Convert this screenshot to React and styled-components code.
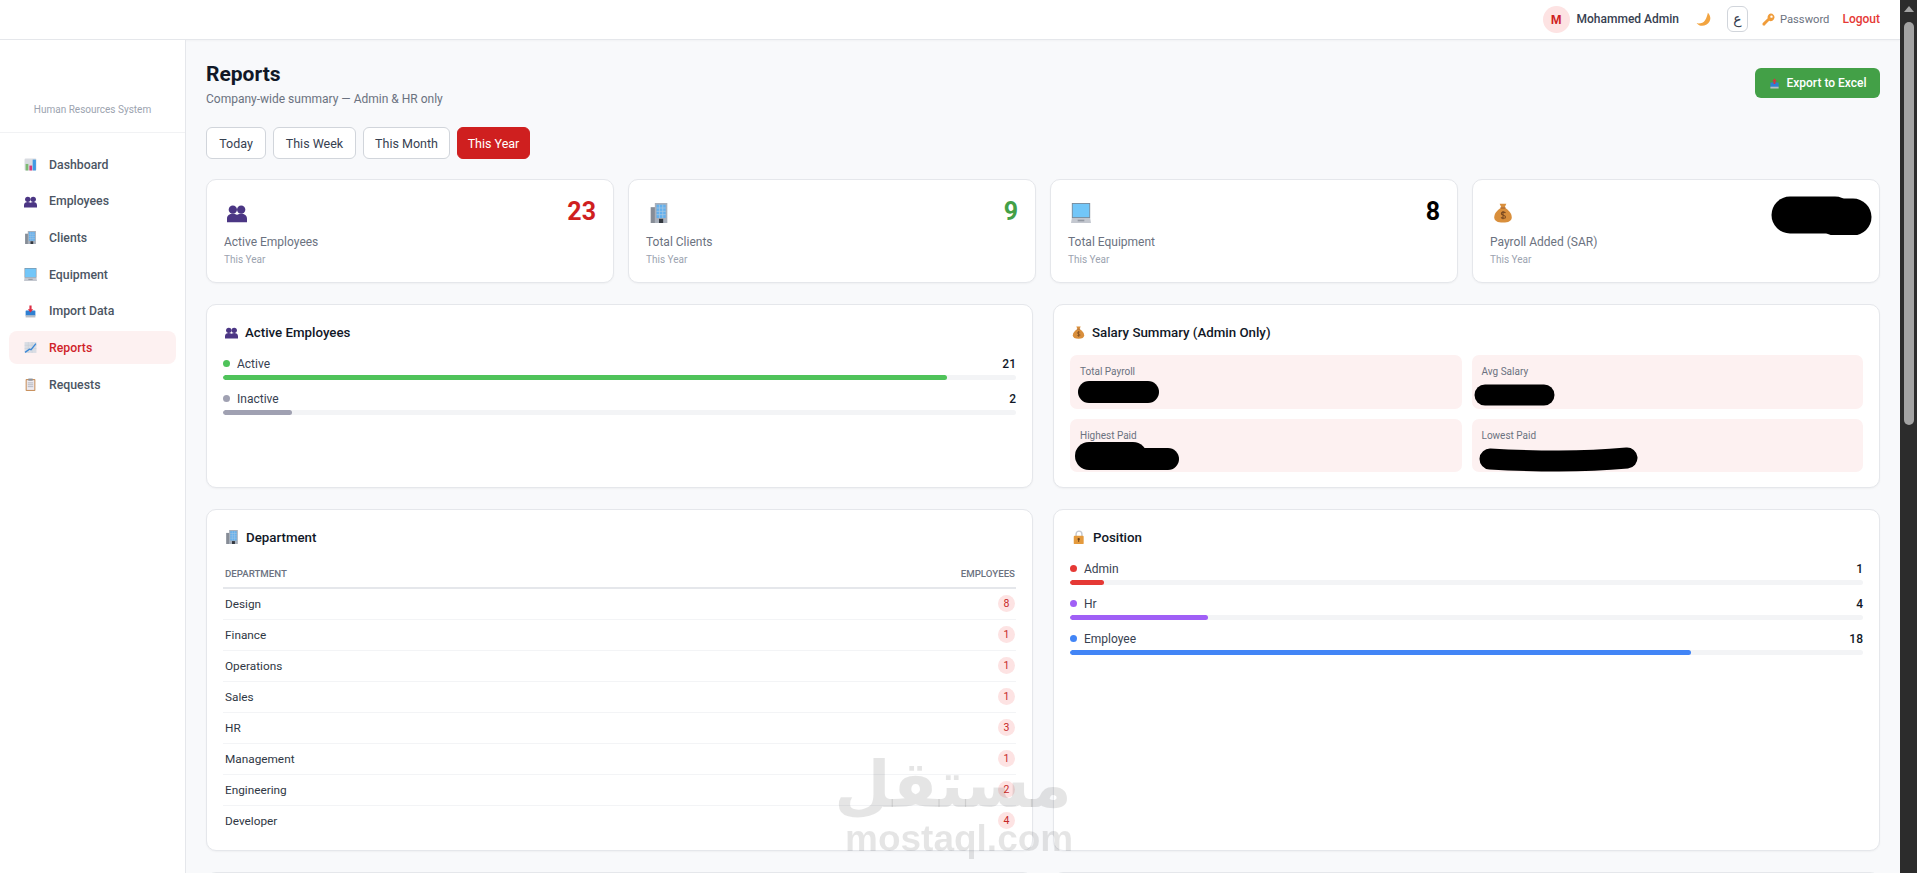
import React from 'react'
import styled, { createGlobalStyle } from 'styled-components'

const GlobalStyle = createGlobalStyle`
    html, body {
        margin: 0;
        height: 100%;
        overflow: hidden;
    }
    body {
        font-family: Roboto, "DejaVu Sans", sans-serif;
        color: #111827;
        background: #f8f9fb;
    }
    * {
        box-sizing: border-box;
    }
`

// small colour icons, the screenshot has emoji here
const Svg = styled.svg`
    display: block;
    flex-shrink: 0;
`

const ChartIcon = ({ size }) => (
    <Svg width={size} height={size} viewBox="0 0 24 24">
        <rect x="1" y="1" width="22" height="22" rx="2" fill="#d9dce1" />
        <rect x="3" y="11" width="5" height="12" fill="#7dba72" />
        <rect x="10" y="14" width="5" height="9" fill="#d8387a" />
        <rect x="16" y="3" width="6" height="20" fill="#3f9be4" />
    </Svg>
)

const BustsIcon = ({ size }) => (
    <Svg width={size} height={size} viewBox="0 0 24 24">
        <circle cx="7" cy="8" r="5" fill="#4b3684" />
        <circle cx="17" cy="8" r="5" fill="#4b3684" />
        <path d="M0 23v-4c0-4 3-6 7-6s5 1.500 5 1.500S13 13 17 13s7 2 7 6v4z" fill="#4b3684" />
    </Svg>
)

const OfficeIcon = ({ size }) => (
    <Svg width={size} height={size} viewBox="0 0 24 24">
        <rect x="2" y="5" width="9" height="19" fill="#868c96" />
        <rect x="7" y="0" width="15" height="24" fill="#a9b0bb" />
        <rect x="9" y="2" width="11" height="16" fill="#62b0ee" />
        <path d="M9 6h11M9 10h11M9 14h11M12.500 2v16M16.500 2v16" stroke="#a9c8e2" strokeWidth="0.9" />
        <rect x="12" y="19" width="5" height="5" fill="#33383f" />
    </Svg>
)

const ComputerIcon = ({ size }) => (
    <Svg width={size} height={size} viewBox="0 0 24 24">
        <rect x="1" y="0" width="22" height="18" fill="#7d8794" />
        <rect x="2" y="1" width="20" height="16" fill="#72c6f8" />
        <path d="M1 18h22l1 6H0z" fill="#c3c7cf" />
        <rect x="8" y="20" width="8" height="2" fill="#9298a2" />
    </Svg>
)

const TrayIcon = ({ size, up }) => (
    <Svg width={size} height={size} viewBox="0 0 24 24">
        <rect x="3" y="10" width="18" height="10" rx="1" fill="#2f80d2" />
        <rect x="3" y="19" width="18" height="4" fill="#b9bec6" />
        {up
            ? <path d="M12 1l5 6h-3v6h-4V7H7z" fill="#dd2e44" />
            : <path d="M10 1h4v7h3l-5 6-5-6h3z" fill="#dd2e44" />}
    </Svg>
)

const TrendIcon = ({ size }) => (
    <Svg width={size} height={size} viewBox="0 0 24 24">
        <rect x="1" y="2" width="22" height="20" fill="#d9dde4" />
        <path d="M1 8h22M1 14h22M8 2v20M15 2v20" stroke="#c4c9d2" strokeWidth="0.8" />
        <path d="M2 21l8-6 3 1 9-11" fill="none" stroke="#3a86d6" strokeWidth="2.400" />
    </Svg>
)

const ClipboardIcon = ({ size }) => (
    <Svg width={size} height={size} viewBox="0 0 24 24">
        <rect x="3" y="2" width="18" height="22" rx="1.500" fill="#c9925f" />
        <rect x="5" y="4" width="14" height="18" fill="#eceaf0" />
        <rect x="8" y="1" width="8" height="4" fill="#8d939d" />
        <path d="M7 9h10M7 12.500h10M7 16h10" stroke="#a2a6b0" strokeWidth="1.400" />
    </Svg>
)

const MoneyIcon = ({ size }) => (
    <Svg width={size} height={size} viewBox="0 0 24 24">
        <path d="M8 1h8l-2 4.500h-4z" fill="#d98f3c" />
        <path d="M9.500 6h5c4.500 2.500 8 7 8 11 0 4.500-4 6.500-10.500 6.500S1.500 21.500 1.500 17c0-4 3.500-8.500 8-11z" fill="#d98f3c" />
        <rect x="9" y="5" width="6" height="1.800" fill="#b2692a" />
        <path d="M15 12c-1-1.500-5-1.500-5 .8 0 2.500 5 1.400 5 3.900 0 2.300-4.200 2-5.300.5M12 9.500v10" fill="none" stroke="#7c4a20" strokeWidth="1.300" />
    </Svg>
)

const MoonIcon = ({ size }) => (
    <Svg width={size} height={size} viewBox="0 0 24 24">
        <path d="M19 1C25 7 24 16 17 20 11 23.500 5 22.500 1 18 7 19 12 17 14.500 13 17 9 18 5 19 1z" fill="#f2a440" />
    </Svg>
)

const KeyIcon = ({ size }) => (
    <Svg width={size} height={size} viewBox="0 0 24 24">
        <path d="M16 1a7 7 0 1 1-2.800 13.400L6 21.500 5.500 23H2l-1-1v-3l9.500-9.500A7 7 0 0 1 16 1zm1.500 3.500a2.200 2.200 0 1 0 0 4.400 2.200 2.200 0 0 0 0-4.400z" fill="#f09c3a" fillRule="evenodd" />
    </Svg>
)

const LockIcon = ({ size }) => (
    <Svg width={size} height={size} viewBox="0 0 24 24">
        <path d="M7 11V7a5 5 0 0 1 10 0v4" fill="none" stroke="#c3c7cf" strokeWidth="2.400" />
        <rect x="3" y="10" width="17" height="14" rx="1.500" fill="#e49a3d" />
        <circle cx="11.500" cy="15.500" r="2" fill="#6b4218" />
        <rect x="10.700" y="15.500" width="1.600" height="5" fill="#6b4218" />
    </Svg>
)

const Shell = styled.div`
    display: flex;
    width: 100vw;
    height: 100vh;
    overflow: hidden;
`

const Page = styled.div`
    flex: 1;
    min-width: 0;
    display: flex;
    flex-direction: column;
`

const TopBar = styled.header`
    height: 40px;
    flex-shrink: 0;
    display: flex;
    align-items: center;
    justify-content: flex-end;
    padding: 0 20px 1px 0;
    background: #fff;
    border-bottom: 1px solid #e5e7eb;
    box-shadow: 0 1px 2px rgba(0, 0, 0, 0.03);
`

const Avatar = styled.div`
    width: 27px;
    height: 27px;
    border-radius: 50%;
    background: #fde3e3;
    color: #cf1f1f;
    font-family: "Liberation Sans", sans-serif;
    font-size: 13px;
    font-weight: 700;
    display: flex;
    align-items: center;
    justify-content: center;
    margin-right: 7px;
`

const UserName = styled.span`
    font-size: 12px;
    font-weight: 500;
    color: #374151;
    margin-right: 17px;
`

const LangButton = styled.div`
    width: 21px;
    height: 26px;
    margin: 0 14px 0 16px;
    border: 1px solid #d1d5db;
    border-radius: 6px;
    font-family: "DejaVu Sans", sans-serif;
    font-size: 14px;
    color: #374151;
    display: flex;
    align-items: center;
    justify-content: center;
`

const PasswordLink = styled.span`
    font-size: 11.200px;
    color: #6b7280;
    margin: 0 13px 0 5px;
`

const LogoutLink = styled.span`
    font-size: 12px;
    font-weight: 500;
    color: #e53935;
`

const Body = styled.div`
    flex: 1;
    min-height: 0;
    display: flex;
`

const Sidebar = styled.aside`
    width: 186px;
    flex-shrink: 0;
    background: #fff;
    border-right: 1px solid #e5e7eb;
`

const Brand = styled.div`
    height: 93px;
    padding-top: 62px;
    text-align: center;
    font-size: 10px;
    line-height: 16px;
    color: #9ca3af;
    border-bottom: 1px solid #f1f2f4;
`

const Nav = styled.nav`
    display: flex;
    flex-direction: column;
    gap: 3.700px;
    padding: 15px 9px 0;
`

const NavItem = styled.div`
    height: 33px;
    display: flex;
    align-items: center;
    gap: 12px;
    padding: 0 15px;
    border-radius: 8px;
    font-size: 12.300px;
    font-weight: 500;
    color: ${props => (props.$active ? '#d01f2a' : '#4b5563')};
    background: ${props => (props.$active ? '#fdf1f1' : 'transparent')};
`

const Main = styled.main`
    flex: 1;
    min-width: 0;
    overflow: hidden;
    padding: 21px 20px 0;
    display: flex;
    flex-direction: column;
    gap: 21px;
`

const PageHead = styled.div`
    display: flex;
    justify-content: space-between;
    align-items: flex-start;
    height: 50px;
`

const Title = styled.h1`
    margin: 0;
    font-size: 21px;
    line-height: 27px;
    font-weight: 700;
    color: #111827;
`

const Subtitle = styled.p`
    margin: 2px 0 0;
    font-size: 12px;
    line-height: 18px;
    color: #6b7280;
`

const ExportButton = styled.button`
    width: 125px;
    height: 30px;
    margin-top: 7px;
    border: none;
    border-radius: 6px;
    background: #43a047;
    color: #fff;
    font-family: inherit;
    font-size: 12px;
    font-weight: 500;
    display: flex;
    align-items: center;
    justify-content: center;
    gap: 7px;
`

const Filters = styled.div`
    display: flex;
    gap: 7px;
    margin-top: -2px;
    margin-bottom: -1px;
`

const FilterButton = styled.button`
    width: ${props => props.$width}px;
    height: 32px;
    padding: 0;
    border: 1px solid ${props => (props.$active ? '#cf1f1f' : '#d1d5db')};
    border-radius: 6px;
    background: ${props => (props.$active ? '#cf1f1f' : '#fff')};
    color: ${props => (props.$active ? '#fff' : '#374151')};
    font-family: inherit;
    font-size: 12.500px;
    font-weight: 400;
`

const StatGrid = styled.section`
    display: grid;
    grid-template-columns: repeat(4, 1fr);
    gap: 14px;
    flex-shrink: 0;
`

const StatCard = styled.div`
    position: relative;
    height: 104px;
    padding: 15px 17px 0;
    background: #fff;
    border: 1px solid #e5e7eb;
    border-radius: 10px;
    box-shadow: 0 1px 2px rgba(0, 0, 0, 0.04);
`

const StatTop = styled.div`
    display: flex;
    justify-content: space-between;
    align-items: flex-start;
    height: 34px;
`

const StatIcon = styled.div`
    margin: 8px 0 0 3px;
`

const StatValue = styled.div`
    font-size: 25px;
    line-height: 34px;
    font-weight: 700;
    color: ${props => props.$color};
`

const StatLabel = styled.div`
    margin-top: 4px;
    font-size: 12px;
    line-height: 18px;
    color: #6b7280;
`

const StatSub = styled.div`
    font-size: 10px;
    line-height: 16px;
    margin-top: 0.500px;
    color: #9ca3af;
`

const Row = styled.section`
    display: grid;
    grid-template-columns: repeat(2, 1fr);
    gap: 20px;
    height: ${props => props.$height}px;
    flex-shrink: 0;
`

const Panel = styled.div`
    padding: 18px 16px 14px;
    background: #fff;
    border: 1px solid #e5e7eb;
    border-radius: 10px;
    box-shadow: 0 1px 2px rgba(0, 0, 0, 0.04);
`

const PanelTitle = styled.h3`
    margin: 0 0 14px;
    height: 18px;
    display: flex;
    align-items: center;
    gap: 7px;
    padding-left: 2px;
    font-size: 13.300px;
    font-weight: 500;
    color: #111827;
`

const BarRow = styled.div`
    padding-top: 0.500px;
    margin-bottom: 10px;
`

const BarHead = styled.div`
    display: flex;
    align-items: center;
    height: 16px;
    margin-bottom: 3.500px;
    font-size: 12px;
    color: #374151;
`

const Dot = styled.span`
    width: 7px;
    height: 7px;
    border-radius: 50%;
    margin-right: 7px;
    background: ${props => props.$color};
`

const BarValue = styled.span`
    margin-left: auto;
    font-weight: 500;
    color: #111827;
`

const Track = styled.div`
    height: 5px;
    border-radius: 3px;
    background: #f3f4f6;
    overflow: hidden;
`

const Fill = styled.div`
    height: 100%;
    border-radius: 3px;
    background: ${props => props.$color};
`

const SalaryGrid = styled.div`
    display: grid;
    grid-template-columns: repeat(2, 1fr);
    grid-auto-rows: 53.500px;
    gap: 10px;
`

const SalaryBox = styled.div`
    position: relative;
    padding: 9px 10px;
    border-radius: 7px;
    background: #fdf1f1;
    font-size: 10px;
    line-height: 16px;
    color: #6b7280;
`

// the black marks someone painted over the amounts
const Redact = styled.svg`
    position: absolute;
    top: ${props => props.$top}px;
    left: ${props => props.$left}px;
    right: ${props => props.$right}px;
`

const Table = styled.table`
    width: 100%;
    border-collapse: collapse;
    font-size: 11.800px;
    color: #2f3744;
`

const Th = styled.th`
    height: 28px;
    padding: 0 1px 0 2px;
    text-align: ${props => (props.$right ? 'right' : 'left')};
    font-size: 9.700px;
    font-weight: 500;
    text-transform: uppercase;
    color: #6b7280;
    border-bottom: 2px solid #e5e7eb;
`

const Td = styled.td`
    height: 31px;
    padding: 0 1px 0 2px;
    text-align: ${props => (props.$right ? 'right' : 'left')};
    border-bottom: ${props => (props.$last ? 'none' : '1px solid #f3f4f6')};
`

const Badge = styled.span`
    display: inline-block;
    min-width: 17px;
    height: 17px;
    padding: 0 5px;
    border-radius: 9px;
    background: #fde3e3;
    color: #c62828;
    font-size: 10.500px;
    line-height: 17px;
    text-align: center;
    vertical-align: middle;
`

const FakeScrollbar = styled.div`
    position: relative;
    width: 17px;
    flex-shrink: 0;
    background: #2c2c2c;
`

const ScrollArrow = styled.div`
    width: 0;
    margin: 6px auto 0;
    border-left: 5px solid transparent;
    border-right: 5px solid transparent;
    border-bottom: 6px solid #a3a3a3;
`

const ScrollThumb = styled.div`
    width: 10px;
    height: 403px;
    margin: 10px auto 0;
    border-radius: 5px;
    background: #a3a3a3;
`

const Watermark = styled.div`
    position: fixed;
    left: 845px;
    top: 747px;
    width: 228px;
    text-align: center;
    color: rgba(0, 0, 0, 0.1);
    pointer-events: none;
`

const WatermarkArabic = styled.div`
    margin-left: -12px;
    font-family: "DejaVu Sans", sans-serif;
    font-size: 65px;
    line-height: 75px;
    font-weight: 700;
    white-space: nowrap;
`

const WatermarkLatin = styled.div`
    font-family: "Liberation Sans", sans-serif;
    font-size: 37px;
    line-height: 34px;
    font-weight: 700;
`

const navItems = [
    { label: 'Dashboard', Icon: ChartIcon },
    { label: 'Employees', Icon: BustsIcon },
    { label: 'Clients', Icon: OfficeIcon },
    { label: 'Equipment', Icon: ComputerIcon },
    { label: 'Import Data', Icon: TrayIcon },
    { label: 'Reports', Icon: TrendIcon, active: true },
    { label: 'Requests', Icon: ClipboardIcon },
]

const filters = [
    { label: 'Today', width: 60 },
    { label: 'This Week', width: 83 },
    { label: 'This Month', width: 87 },
    { label: 'This Year', width: 73, active: true },
]

const stats = [
    { label: 'Active Employees', value: '23', color: '#cf1f1f', Icon: BustsIcon },
    { label: 'Total Clients', value: '9', color: '#43a047', Icon: OfficeIcon },
    { label: 'Total Equipment', value: '8', color: '#000', Icon: ComputerIcon },
    { label: 'Payroll Added (SAR)', hidden: true, Icon: MoneyIcon },
]

const statusBars = [
    { label: 'Active', value: 21, color: '#4fc35a' },
    { label: 'Inactive', value: 2, color: '#a0a1b2' },
]

const positionBars = [
    { label: 'Admin', value: 1, color: '#e53935' },
    { label: 'Hr', value: 4, color: '#a05ff6' },
    { label: 'Employee', value: 18, color: '#4285f6' },
]

const departments = [
    ['Design', 8],
    ['Finance', 1],
    ['Operations', 1],
    ['Sales', 1],
    ['HR', 3],
    ['Management', 1],
    ['Engineering', 2],
    ['Developer', 4],
]

const salaryBoxes = [
    {
        label: 'Total Payroll', w: 81, h: 22, top: 26, left: 8,
        marks: [{ d: 'M11 11H70', width: 22 }],
    },
    {
        label: 'Avg Salary', w: 81, h: 22, top: 29, left: 2,
        marks: [{ d: 'M11 11H70', width: 21 }],
    },
    {
        label: 'Highest Paid', w: 104, h: 29, top: 23, left: 5,
        marks: [{ d: 'M14 14H58', width: 28 }, { d: 'M58 17H93', width: 22 }],
    },
    {
        label: 'Lowest Paid', w: 159, h: 25, top: 28, left: 7,
        marks: [{ d: 'M11 12Q45 14 80 14T148 11', width: 21 }],
    },
]

const Bars = ({ items }) => (
    <>
        {items.map(item => (
            <BarRow key={item.label}>
                <BarHead>
                    <Dot $color={item.color} />
                    {item.label}
                    <BarValue>{item.value}</BarValue>
                </BarHead>
                <Track>
                    <Fill $color={item.color} style={{ width: `${(item.value / 23) * 100}%` }} />
                </Track>
            </BarRow>
        ))}
    </>
)

const App = () => {
    return (
        <Shell>
            <GlobalStyle />
            <Page>
                <TopBar>
                    <Avatar>M</Avatar>
                    <UserName>Mohammed Admin</UserName>
                    <MoonIcon size={15} />
                    <LangButton>ع</LangButton>
                    <KeyIcon size={13} />
                    <PasswordLink>Password</PasswordLink>
                    <LogoutLink>Logout</LogoutLink>
                </TopBar>
                <Body>
                    <Sidebar>
                        <Brand>Human Resources System</Brand>
                        <Nav>
                            {navItems.map(({ label, Icon, active }) => (
                                <NavItem key={label} $active={active}>
                                    <Icon size={13} />
                                    {label}
                                </NavItem>
                            ))}
                        </Nav>
                    </Sidebar>
                    <Main>
                        <PageHead>
                            <div>
                                <Title>Reports</Title>
                                <Subtitle>Company-wide summary — Admin &amp; HR only</Subtitle>
                            </div>
                            <ExportButton>
                                <TrayIcon size={11} up />
                                Export to Excel
                            </ExportButton>
                        </PageHead>
                        <Filters>
                            {filters.map(filter => (
                                <FilterButton key={filter.label} $width={filter.width} $active={filter.active}>
                                    {filter.label}
                                </FilterButton>
                            ))}
                        </Filters>
                        <StatGrid>
                            {stats.map(({ label, value, color, hidden, Icon }) => (
                                <StatCard key={label}>
                                    <StatTop>
                                        <StatIcon><Icon size={20} /></StatIcon>
                                        {value && <StatValue $color={color}>{value}</StatValue>}
                                    </StatTop>
                                    <StatLabel>{label}</StatLabel>
                                    <StatSub>This Year</StatSub>
                                    {hidden && (
                                        <Redact width="101" height="39" $top={16} $right={7}>
                                            <path d="M19 19H64" stroke="#000" strokeWidth="37" strokeLinecap="round" />
                                            <path d="M64 21H82" stroke="#000" strokeWidth="37" strokeLinecap="round" />
                                        </Redact>
                                    )}
                                </StatCard>
                            ))}
                        </StatGrid>
                        <Row $height={184}>
                            <Panel>
                                <PanelTitle><BustsIcon size={13} /> Active Employees</PanelTitle>
                                <Bars items={statusBars} />
                            </Panel>
                            <Panel>
                                <PanelTitle><MoneyIcon size={13} /> Salary Summary (Admin Only)</PanelTitle>
                                <SalaryGrid>
                                    {salaryBoxes.map(box => (
                                        <SalaryBox key={box.label}>
                                            {box.label}
                                            <Redact width={box.w} height={box.h} $top={box.top} $left={box.left}>
                                                {box.marks.map(mark => (
                                                    <path
                                                        key={mark.d}
                                                        d={mark.d}
                                                        fill="none"
                                                        stroke="#000"
                                                        strokeWidth={mark.width}
                                                        strokeLinecap="round"
                                                    />
                                                ))}
                                            </Redact>
                                        </SalaryBox>
                                    ))}
                                </SalaryGrid>
                            </Panel>
                        </Row>
                        <Row $height={342}>
                            <Panel>
                                <PanelTitle><OfficeIcon size={14} /> Department</PanelTitle>
                                <Table>
                                    <thead>
                                        <tr>
                                            <Th>Department</Th>
                                            <Th $right>Employees</Th>
                                        </tr>
                                    </thead>
                                    <tbody>
                                        {departments.map(([name, count], i) => (
                                            <tr key={name}>
                                                <Td $last={i === departments.length - 1}>{name}</Td>
                                                <Td $right $last={i === departments.length - 1}>
                                                    <Badge>{count}</Badge>
                                                </Td>
                                            </tr>
                                        ))}
                                    </tbody>
                                </Table>
                            </Panel>
                            <Panel>
                                <PanelTitle><LockIcon size={14} /> Position</PanelTitle>
                                <Bars items={positionBars} />
                            </Panel>
                        </Row>
                        <Row $height={120}>
                            <Panel />
                            <Panel />
                        </Row>
                    </Main>
                </Body>
            </Page>
            <FakeScrollbar>
                <ScrollArrow />
                <ScrollThumb />
            </FakeScrollbar>
            <Watermark>
                <WatermarkArabic>مستقل</WatermarkArabic>
                <WatermarkLatin>mostaql.com</WatermarkLatin>
            </Watermark>
        </Shell>
    )
}

export default App
